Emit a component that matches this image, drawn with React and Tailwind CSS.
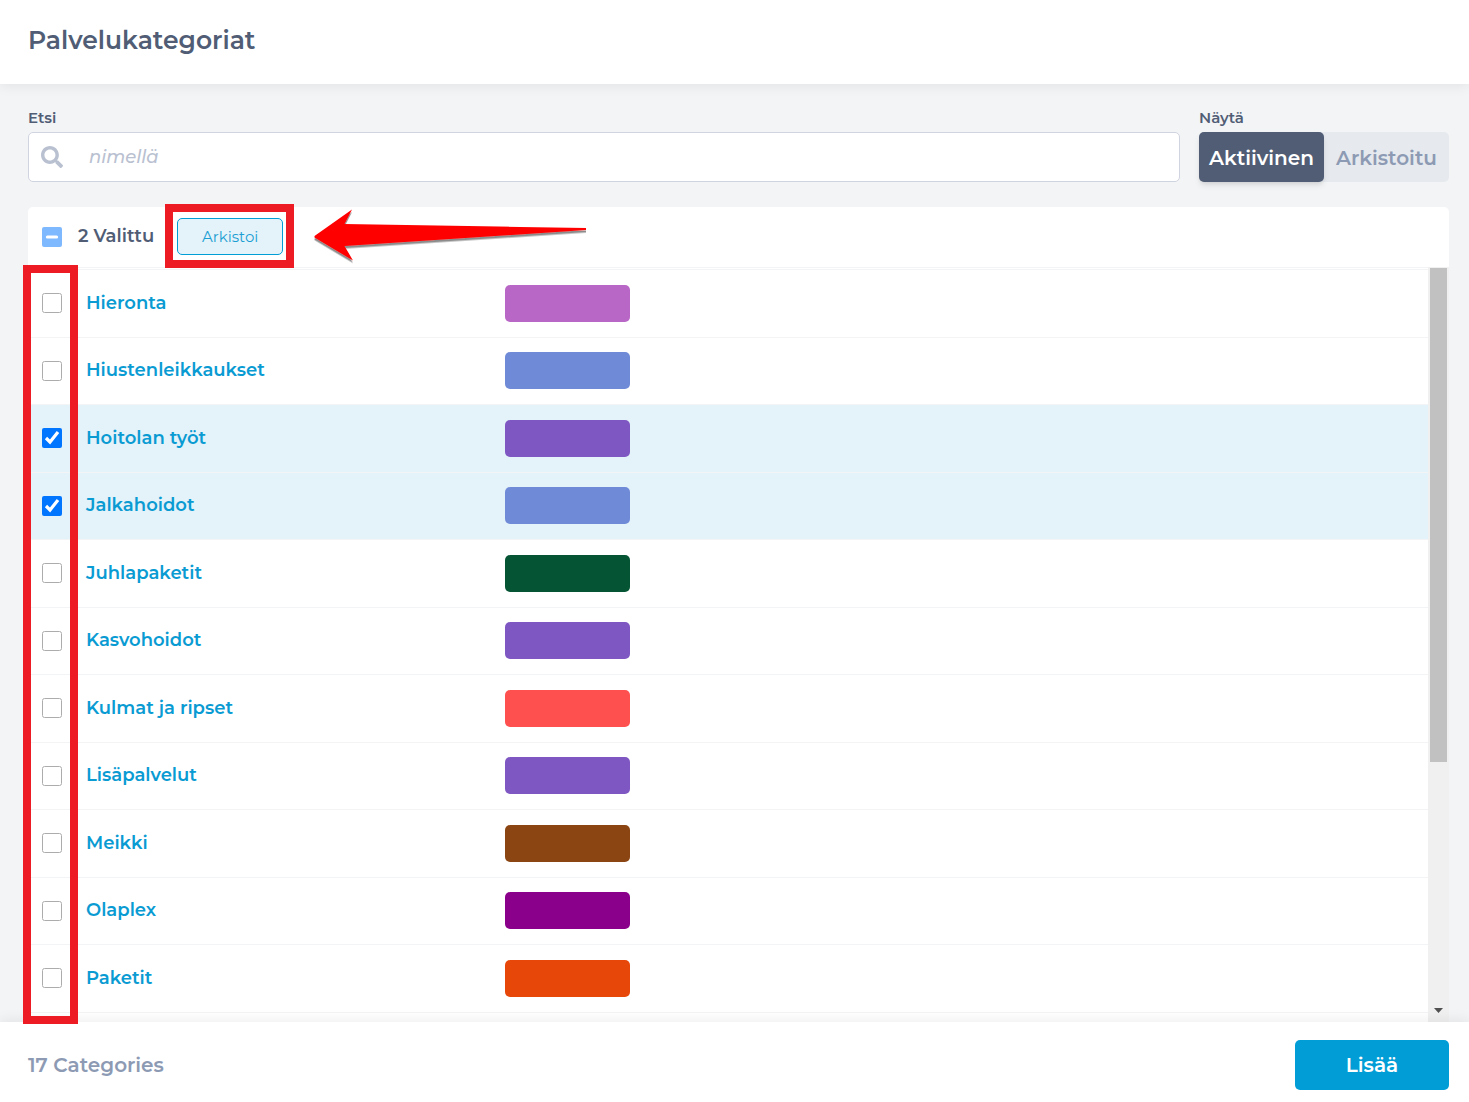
import { useEffect, useRef, useState } from 'react';
import { FaSearch } from 'react-icons/fa';

const CATEGORIES = [
  { id: 1, name: 'Hieronta', swatch: 'bg-[#b967c7]' },
  { id: 2, name: 'Hiustenleikkaukset', swatch: 'bg-[#6f8ad7]' },
  { id: 3, name: 'Hoitolan työt', swatch: 'bg-[#7e57c2]' },
  { id: 4, name: 'Jalkahoidot', swatch: 'bg-[#6f8ad7]' },
  { id: 5, name: 'Juhlapaketit', swatch: 'bg-[#055535]' },
  { id: 6, name: 'Kasvohoidot', swatch: 'bg-[#7e57c2]' },
  { id: 7, name: 'Kulmat ja ripset', swatch: 'bg-[#ff5050]' },
  { id: 8, name: 'Lisäpalvelut', swatch: 'bg-[#7e57c2]' },
  { id: 9, name: 'Meikki', swatch: 'bg-[#8b4513]' },
  { id: 10, name: 'Olaplex', swatch: 'bg-[#8b008b]' },
  { id: 11, name: 'Paketit', swatch: 'bg-[#e8470a]' },
];

const TOTAL = 17;

function SearchField() {
  return (
    <div className="min-w-0 flex-1">
      <label htmlFor="search" className="block text-[15px] leading-5 font-semibold">
        Etsi
      </label>
      <div className="mt-1 flex h-[50px] items-center rounded-[5px] border border-[#d0d4e0] bg-white pl-3">
        <FaSearch className="size-[22px] shrink-0 text-[#b9c1d1]" aria-hidden="true" />
        <input
          id="search"
          type="text"
          placeholder="nimellä"
          className="ml-[26px] h-full min-w-0 flex-1 bg-transparent text-[18px] font-medium outline-none placeholder:text-[#b9c1d1] placeholder:italic"
        />
      </div>
    </div>
  );
}

function StatusToggle() {
  return (
    <div role="group" aria-labelledby="show-label">
      <span id="show-label" className="block text-[15px] leading-5 font-semibold">
        Näytä
      </span>
      <div className="mt-1 grid h-[50px] w-[250px] grid-cols-2 rounded-[5px] bg-[#e6e9ee] text-xl font-semibold">
        <button type="button" className="rounded-[5px] bg-[#505d75] pt-0.5 text-white shadow-md">
          Aktiivinen
        </button>
        <button type="button" className="rounded-[5px] pt-0.5 text-[#8d9ab3]">
          Arkistoitu
        </button>
      </div>
    </div>
  );
}

function Arrow() {
  return (
    <svg
      className="absolute top-0 left-[286px] h-[60px] w-[276px]"
      viewBox="0 0 276 60"
      aria-hidden="true"
    >
      <defs>
        <filter id="arrow-shadow" x="-5%" y="-10%" width="110%" height="130%">
          <feDropShadow dx="0" dy="2.5" stdDeviation="0.7" floodColor="#000" floodOpacity="0.45" />
        </filter>
      </defs>
      <path
        d="M0.500 29 L38 2.500 L30.500 17 L272 21 V23 L30.500 39 L39 53.500 L0.500 30.500 Z"
        fill="#ff0000"
        filter="url(#arrow-shadow)"
      />
    </svg>
  );
}

function SelectionBar({ count, onToggleAll }) {
  const ref = useRef(null);

  useEffect(() => {
    ref.current.indeterminate = count > 0 && count < CATEGORIES.length;
    ref.current.checked = count === CATEGORIES.length;
  }, [count]);

  return (
    <div className="relative flex h-[60px] shrink-0 items-center rounded-t-[5px] bg-white pb-px pl-3.5">
      <input
        ref={ref}
        type="checkbox"
        aria-label="Valitse kaikki"
        onChange={onToggleAll}
        className="size-5 opacity-50"
      />
      <span className="ml-4 text-[18px] font-semibold">{count} Valittu</span>
      <div className="relative ml-[23px]">
        <button
          type="button"
          className="block h-[37px] w-[106px] rounded-[5px] border border-[#009dd6] bg-[#e4f2f9] pt-0.5 text-[15px] text-[#1a9fd4]"
        >
          Arkistoi
        </button>
        <div className="pointer-events-none absolute -top-3.5 -right-[11px] -bottom-[13px] -left-3 z-10 border-8 border-[#ed1c24]" />
      </div>
      <Arrow />
    </div>
  );
}

function CategoryRow({ category, checked, onToggle }) {
  return (
    <tr
      className={[
        'h-[67px] border-b border-[#f3f4f6] odd:h-[68px]',
        checked ? 'bg-[#e4f2f9]' : 'bg-white',
      ].join(' ')}
    >
      <td className="pb-px pl-3.5">
        <input
          id={`category-${category.id}`}
          type="checkbox"
          checked={checked}
          onChange={() => onToggle(category.id)}
          className="block size-5 opacity-60 checked:opacity-100"
        />
      </td>
      <td className="pb-px">
        <label
          htmlFor={`category-${category.id}`}
          className="text-[18px] font-semibold text-[#0a9bd3]"
        >
          {category.name}
        </label>
      </td>
      <td className="pb-px">
        <div className={`h-[37px] w-[125px] rounded-[5px] ${category.swatch}`} />
      </td>
    </tr>
  );
}

function ScrollTrack() {
  return (
    <div className="flex w-[21px] shrink-0 flex-col items-center bg-[#f0f0f0] pt-px" aria-hidden="true">
      <div className="h-[494px] w-[17px] bg-[#c1c1c1]" />
      <svg className="mt-auto mb-2 h-[6px] w-[10px]" viewBox="0 0 10 6">
        <path d="M0 0 H9 L4.500 5 Z" fill="#505050" />
      </svg>
    </div>
  );
}

export default function App() {
  const [selected, setSelected] = useState([3, 4]);

  const toggle = (id) =>
    setSelected((prev) => (prev.includes(id) ? prev.filter((x) => x !== id) : [...prev, id]));

  const toggleAll = () =>
    setSelected((prev) => (prev.length === CATEGORIES.length ? [] : CATEGORIES.map((c) => c.id)));

  return (
    <div className="flex h-screen flex-col bg-[#f3f4f6] font-['Montserrat',Inter,sans-serif] text-[#505d75]">
      <header className="z-10 flex h-[84px] shrink-0 items-center bg-white px-7 pb-0.5 shadow-[0_2px_12px_rgba(0,0,0,0.07)]">
        <h1 className="text-[25px] font-semibold">Palvelukategoriat</h1>
      </header>

      <main className="flex min-h-0 flex-1 flex-col pt-6 pr-5 pl-7">
        <div className="flex gap-[19px]">
          <SearchField />
          <StatusToggle />
        </div>

        <section className="mt-[25px] flex min-h-0 flex-1 flex-col">
          <SelectionBar count={selected.length} onToggleAll={toggleAll} />
          <div className="relative flex min-h-0 flex-1">
            <div className="min-w-0 flex-1 overflow-hidden border-t border-[#f3f4f6] bg-white pt-px">
              <table className="w-full table-fixed border-collapse border-t border-[#f3f4f6]">
                <colgroup>
                  <col className="w-[58px]" />
                  <col className="w-[419px]" />
                  <col />
                </colgroup>
                <tbody>
                  {CATEGORIES.map((category) => (
                    <CategoryRow
                      key={category.id}
                      category={category}
                      checked={selected.includes(category.id)}
                      onToggle={toggle}
                    />
                  ))}
                </tbody>
              </table>
            </div>
            <ScrollTrack />
            <div className="pointer-events-none absolute -top-0.5 -bottom-0.5 -left-[5px] z-20 w-[55px] border-8 border-[#ed1c24]" />
          </div>
        </section>
      </main>

      <footer className="z-10 flex h-20 shrink-0 items-center justify-between bg-white pt-1.5 pr-5 pl-7 shadow-[0_-2px_12px_rgba(0,0,0,0.07)]">
        <p className="text-xl font-semibold text-[#8d9ab3]">{TOTAL} Categories</p>
        <button
          type="button"
          className="h-[50px] w-[154px] rounded-[5px] bg-[#009dd6] text-xl font-semibold text-white"
        >
          Lisää
        </button>
      </footer>
    </div>
  );
}
